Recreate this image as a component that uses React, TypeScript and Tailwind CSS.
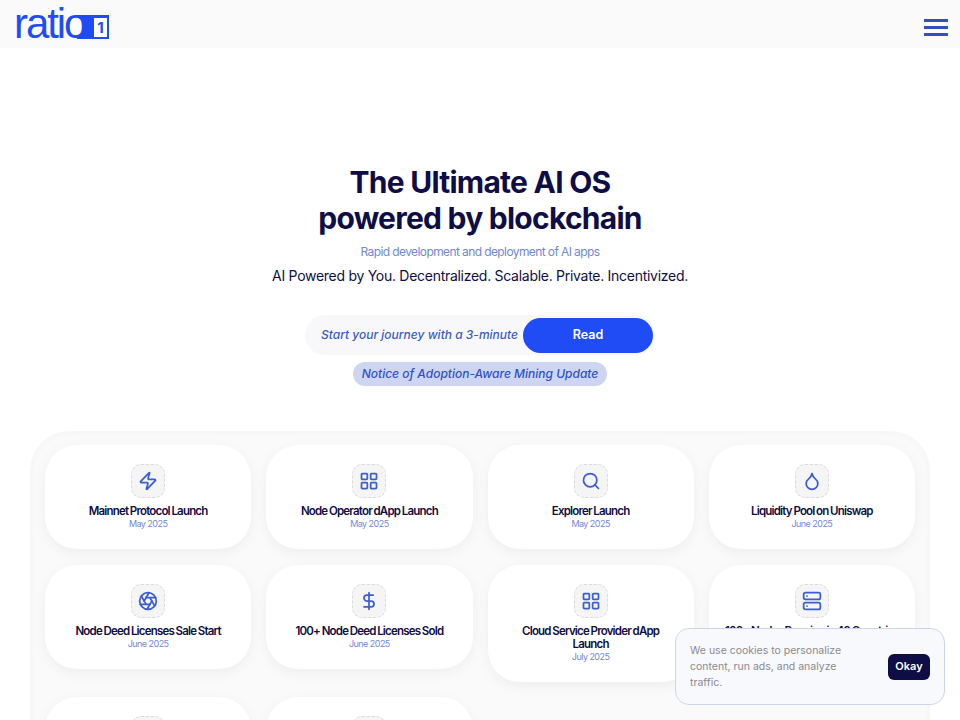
import { Zap, LayoutGrid, Search, Droplet, Aperture, DollarSign, Server } from 'lucide-react';
import type { LucideIcon } from 'lucide-react';

interface Milestone {
  title?: string;
  date?: string;
  icon?: LucideIcon;
}

const milestones: Milestone[] = [
  { title: 'Mainnet Protocol Launch', date: 'May 2025', icon: Zap },
  { title: 'Node Operator dApp Launch', date: 'May 2025', icon: LayoutGrid },
  { title: 'Explorer Launch', date: 'May 2025', icon: Search },
  { title: 'Liquidity Pool on Uniswap', date: 'June 2025', icon: Droplet },
  { title: 'Node Deed Licenses Sale Start', date: 'June 2025', icon: Aperture },
  { title: '100+ Node Deed Licenses Sold', date: 'June 2025', icon: DollarSign },
  { title: 'Cloud Service Provider dApp\nLaunch', date: 'July 2025', icon: LayoutGrid },
  { title: '100+ Nodes Running in 40 Countries', date: 'July 2025', icon: Server },
  {},
  {},
];

function Logo() {
  return (
    <div className="relative h-[40px] w-[94px] text-[#1f4cf5]">
      <span className="absolute top-[11px] left-[62px] flex h-[24px] w-[32px] items-center justify-end bg-[#1f4cf5] pr-[2px]">
        <span className="flex h-[19px] w-[13px] items-center justify-center bg-white text-[15px] leading-none font-bold text-[#1f4cf5]">1</span>
      </span>
      <span className="absolute top-[13px] left-[53px] h-[20px] w-[16px] rounded-full bg-white" />
      <span className="absolute top-[-3px] left-[-1px] font-['Liberation_Sans',sans-serif] text-[42px] leading-[46px] tracking-[-0.05em]">ratio</span>
    </div>
  );
}

function MilestoneCard({ title, date, icon: Icon }: Milestone) {
  return (
    <div className="flex flex-col items-center rounded-[32px] bg-white px-4 pt-[19px] pb-[19px] text-center shadow-[0_4px_14px_rgba(0,0,0,0.05)]">
      <div className="mb-[7px] flex h-[34px] w-[34px] items-center justify-center rounded-[10px] border border-dashed border-[#dadada] bg-[#f5f5f6]">
        {Icon && <Icon size={20} strokeWidth={2.1} className="text-[#3b5fd0]" />}
      </div>
      <p className="text-[11.5px] leading-[13px] font-semibold tracking-[-0.07em] whitespace-pre-line text-[#0f0d45] [word-spacing:-0.5px]">{title}</p>
      <p className="text-[9px] leading-[12px] tracking-[-0.06em] text-[#7288d4]">{date}</p>
    </div>
  );
}

export default function App() {
  return (
    <div className="h-screen overflow-hidden bg-white font-['Inter',sans-serif]">
      <header className="flex h-12 items-center justify-between bg-[#fafafa] pr-3 pl-[15px]">
        <Logo />
        <button type="button" aria-label="Open menu" className="mt-[6px] flex w-6 flex-col gap-[4px]">
          <span className="h-[3px] bg-[#3350b8]" />
          <span className="h-[3px] bg-[#3350b8]" />
          <span className="h-[3px] bg-[#3350b8]" />
        </button>
      </header>

      <section className="flex flex-col items-center pt-[116px] text-center">
        <h1 className="text-[30px] leading-[36px] font-bold tracking-[-0.025em] text-[#0f0d45]">
          The Ultimate AI OS
          <br />
          powered by blockchain
        </h1>
        <p className="mt-[7px] text-[12px] leading-[18px] tracking-[-0.05em] text-[#7288d4]">
          Rapid development and deployment of AI apps
        </p>
        <p className="mt-[3px] text-[14px] leading-[24px] tracking-[-0.02em] text-[#0f0d45]">
          AI Powered by You. Decentralized. Scalable. Private. Incentivized.
        </p>

        <div className="mt-[27px] flex h-10 w-[350px] items-center justify-between rounded-full bg-[#f8f8fa] pr-[2px] pl-4">
          <span className="text-[12px] font-medium whitespace-nowrap text-[#3b5bc4] italic">Start your journey with a 3-minute</span>
          <button type="button" className="h-[35px] w-[130px] shrink-0 rounded-full bg-[#1f4cf5] text-[12.5px] font-semibold text-white">
            Read
          </button>
        </div>
        <a className="mt-[7px] flex h-[24px] w-[254px] items-center justify-center rounded-full bg-[#cdd5f0] text-[12px] font-medium whitespace-nowrap text-[#2f50c8] italic">
          Notice of Adoption-Aware Mining Update
        </a>
      </section>

      <section className="mx-[30px] mt-[45px] rounded-[40px] bg-[#fafafa] px-[15px] pt-[14px] pb-[15px] shadow-[inset_0_0_10px_rgba(0,0,0,0.03)]">
        <div className="grid grid-cols-4 items-start gap-x-[15px] gap-y-[15.5px]">
          {milestones.map((m, i) => (
            <MilestoneCard key={i} {...m} />
          ))}
        </div>
      </section>

      <div className="fixed right-[15px] bottom-[15px] flex h-[77px] w-[270px] items-center justify-between rounded-[14px] border border-[#cdd5ee] bg-[#f8f9fc] pr-[14px] pl-[14px]">
        <p className="w-[170px] text-[10.5px] leading-[16px] text-[#8a8a8f]">
          We use cookies to personalize content, run ads, and analyze traffic.
        </p>
        <button type="button" className="h-[26px] w-[42px] rounded-[6px] bg-[#0f0d45] text-[11px] font-semibold text-white">
          Okay
        </button>
      </div>
    </div>
  );
}
